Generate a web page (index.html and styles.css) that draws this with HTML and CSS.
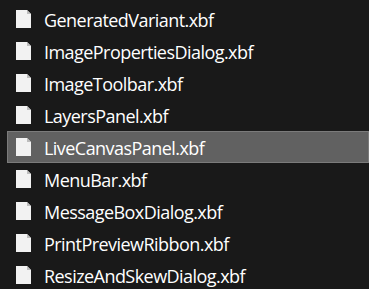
FILE: index.html
```html
<!DOCTYPE html>
<html>
  <head>
    <title>Files</title>
    <link rel="stylesheet" href="styles.css">
  </head>
  <body>
    <ul class="file-list">
      <li class="file"><svg class="file-icon" viewBox="0 0 15 18"><path d="M0 0H11L15 4V18H0Z" fill="#f2f2f2"/><path d="M11 0V4H15" fill="#bdbdbd"/></svg><span>GeneratedVariant.xbf</span></li>
      <li class="file"><svg class="file-icon" viewBox="0 0 15 18"><path d="M0 0H11L15 4V18H0Z" fill="#f2f2f2"/><path d="M11 0V4H15" fill="#bdbdbd"/></svg><span>ImagePropertiesDialog.xbf</span></li>
      <li class="file"><svg class="file-icon" viewBox="0 0 15 18"><path d="M0 0H11L15 4V18H0Z" fill="#f2f2f2"/><path d="M11 0V4H15" fill="#bdbdbd"/></svg><span>ImageToolbar.xbf</span></li>
      <li class="file"><svg class="file-icon" viewBox="0 0 15 18"><path d="M0 0H11L15 4V18H0Z" fill="#f2f2f2"/><path d="M11 0V4H15" fill="#bdbdbd"/></svg><span>LayersPanel.xbf</span></li>
      <li class="file selected"><svg class="file-icon" viewBox="0 0 15 18"><path d="M0 0H11L15 4V18H0Z" fill="#f2f2f2"/><path d="M11 0V4H15" fill="#bdbdbd"/></svg><span>LiveCanvasPanel.xbf</span></li>
      <li class="file"><svg class="file-icon" viewBox="0 0 15 18"><path d="M0 0H11L15 4V18H0Z" fill="#f2f2f2"/><path d="M11 0V4H15" fill="#bdbdbd"/></svg><span>MenuBar.xbf</span></li>
      <li class="file"><svg class="file-icon" viewBox="0 0 15 18"><path d="M0 0H11L15 4V18H0Z" fill="#f2f2f2"/><path d="M11 0V4H15" fill="#bdbdbd"/></svg><span>MessageBoxDialog.xbf</span></li>
      <li class="file"><svg class="file-icon" viewBox="0 0 15 18"><path d="M0 0H11L15 4V18H0Z" fill="#f2f2f2"/><path d="M11 0V4H15" fill="#bdbdbd"/></svg><span>PrintPreviewRibbon.xbf</span></li>
      <li class="file"><svg class="file-icon" viewBox="0 0 15 18"><path d="M0 0H11L15 4V18H0Z" fill="#f2f2f2"/><path d="M11 0V4H15" fill="#bdbdbd"/></svg><span>ResizeAndSkewDialog.xbf</span></li>
    </ul>
  </body>
</html>
```

FILE: styles.css
```css
body {
  margin: 0;
  background-color: #191919;
  color: #ffffff;
  font-family: "Open Sans", "Noto Sans", sans-serif;
  overflow: hidden;
}

.file-list {
  list-style: none;
  margin: 0;
  padding: 3px 0 0 7px;
}

.file {
  display: flex;
  align-items: center;
  height: 32px;
  box-sizing: border-box;
  border: 1px solid transparent;
  padding-left: 8px;
}

.file-icon {
  width: 15px;
  height: 18px;
  flex-shrink: 0;
  margin-right: 13px;
}

.file span {
  font-size: 18px;
  letter-spacing: -0.55px;
  margin-top: 1px;
}

.selected {
  background-color: #616161;
  border-color: #7b7b7b;
}
```
